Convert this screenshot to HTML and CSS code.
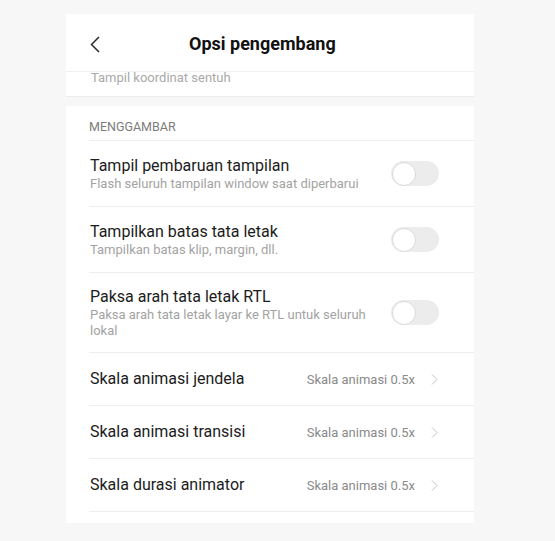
FILE: index.html
```html
<!DOCTYPE html>
<html lang="id">
<head>
<meta charset="utf-8">
<title>Opsi pengembang</title>
<link rel="stylesheet" href="styles.css">
</head>
<body>
<div class="panel">
  <div class="header">
    <svg class="back" width="10" height="17" viewBox="0 0 10 17"><path d="M9 1 L1.5 8.5 L9 16" fill="none" stroke="#2a2a2a" stroke-width="1.5"/></svg>
    <div class="title">Opsi pengembang</div>
  </div>
  <div class="scrolled">
    <div class="scrolled-text">Tampil koordinat sentuh</div>
  </div>
  <div class="section">
    <div class="group-title">MENGGAMBAR</div>
    <div class="row toggle-row">
      <div class="texts">
        <div class="row-title">Tampil pembaruan tampilan</div>
        <div class="row-sub">Flash seluruh tampilan window saat diperbarui</div>
      </div>
      <div class="switch"><div class="knob"></div></div>
    </div>
    <div class="row toggle-row">
      <div class="texts">
        <div class="row-title">Tampilkan batas tata letak</div>
        <div class="row-sub">Tampilkan batas klip, margin, dll.</div>
      </div>
      <div class="switch"><div class="knob"></div></div>
    </div>
    <div class="row toggle-row tall">
      <div class="texts">
        <div class="row-title">Paksa arah tata letak RTL</div>
        <div class="row-sub">Paksa arah tata letak layar ke RTL untuk seluruh lokal</div>
      </div>
      <div class="switch"><div class="knob"></div></div>
    </div>
    <div class="row value-row">
      <div class="row-title grow">Skala animasi jendela</div>
      <div class="value">Skala animasi 0.5x</div>
      <svg class="chev" width="7" height="11" viewBox="0 0 7 11"><path d="M1 0.5 L6 5.5 L1 10.5" fill="none" stroke="#c2c2c2" stroke-width="1"/></svg>
    </div>
    <div class="row value-row">
      <div class="row-title grow">Skala animasi transisi</div>
      <div class="value">Skala animasi 0.5x</div>
      <svg class="chev" width="7" height="11" viewBox="0 0 7 11"><path d="M1 0.5 L6 5.5 L1 10.5" fill="none" stroke="#c2c2c2" stroke-width="1"/></svg>
    </div>
    <div class="row value-row">
      <div class="row-title grow">Skala durasi animator</div>
      <div class="value">Skala animasi 0.5x</div>
      <svg class="chev" width="7" height="11" viewBox="0 0 7 11"><path d="M1 0.5 L6 5.5 L1 10.5" fill="none" stroke="#c2c2c2" stroke-width="1"/></svg>
    </div>
  </div>
</div>
</body>
</html>
```

FILE: styles.css
```css
html, body {
  margin: 0;
  padding: 0;
  background: #f7f7f7;
  font-family: Roboto, "Noto Sans", Arial, sans-serif;
}
body {
  padding-top: 14px;
  height: 541px;
  box-sizing: border-box;
}
.panel {
  width: 408px;
  margin-left: 66px;
}
.header {
  background: #fff;
  border-bottom: 1px solid #efefef;
  display: flex;
  align-items: center;
  padding-left: 24px;
  padding-top: 3px;
  box-sizing: content-box;
  height: 54px;
}
.back {
  display: block;
}
.title {
  margin-left: 89px;
  font-size: 18px;
  font-weight: 700;
  line-height: 24px;
  color: #111;
}
.scrolled {
  background: #fff;
  height: 24px;
  overflow: hidden;
  border-bottom: 1px solid #ececec;
}
.scrolled-text {
  margin-top: -2px;
  padding-left: 25px;
  font-size: 13px;
  line-height: 15px;
  color: #a9a9a9;
}
.section {
  background: #fff;
  margin-top: 9px;
  padding-bottom: 11px;
}
.group-title {
  height: 35px;
  box-sizing: border-box;
  padding-top: 13px;
  margin-left: 23px;
  font-size: 12.5px;
  line-height: 16px;
  color: #7c7c7c;
  border-bottom: 1px solid #eeeeee;
}
.row {
  margin-left: 23px;
  padding-left: 1px;
  padding-right: 35px;
  display: flex;
  align-items: center;
  border-bottom: 1px solid #eeeeee;
  box-sizing: border-box;
}
.toggle-row {
  height: 66px;
}
.toggle-row.tall {
  height: 80px;
}
.value-row {
  height: 53px;
  padding-right: 36px;
}
.texts {
  flex: 1;
  margin-right: 16px;
}
.row-title {
  font-size: 16px;
  line-height: 20px;
  color: #1c1c1c;
}
.grow {
  flex: 1;
}
.row-sub {
  font-size: 13px;
  line-height: 16px;
  color: #a3a3a3;
}
.switch {
  width: 48px;
  height: 25px;
  border-radius: 13px;
  background: #ececec;
  position: relative;
  flex: none;
}
.knob {
  position: absolute;
  left: 1px;
  top: 0.5px;
  width: 22px;
  height: 22px;
  border-radius: 50%;
  background: #fff;
  border: 1px solid #dadada;
}
.value {
  font-size: 13px;
  color: #8a8a8a;
  margin-right: 16px;
}
.chev {
  display: block;
  flex: none;
}
```
